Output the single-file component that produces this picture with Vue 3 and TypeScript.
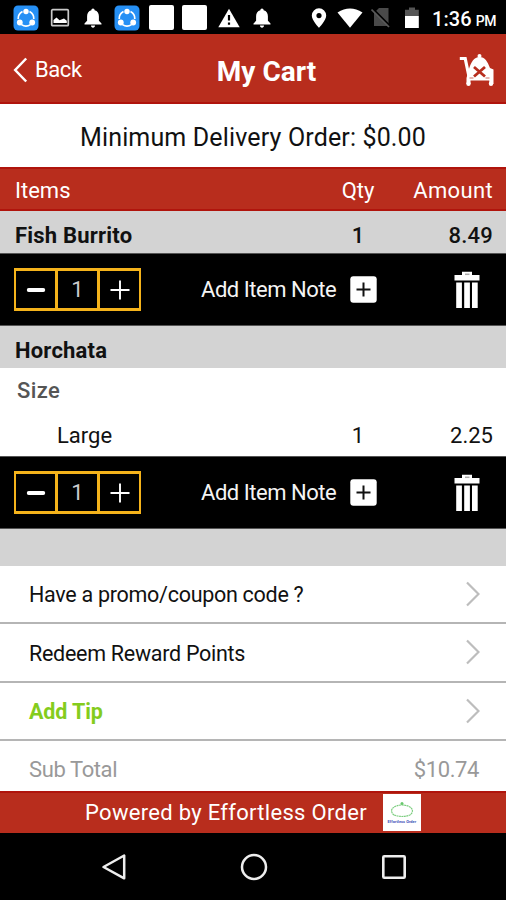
<script setup lang="ts">
import { ref } from 'vue'

interface CartItem {
  name: string
  qty: number
  price: string
  option?: { group: string; value: string }
}

const items = ref<CartItem[]>([
  { name: 'Fish Burrito', qty: 1, price: '8.49' },
  { name: 'Horchata', qty: 1, price: '2.25', option: { group: 'Size', value: 'Large' } },
])

const actions = [
  { label: 'Have a promo/coupon code ?', kind: 'promo' },
  { label: 'Redeem Reward Points', kind: 'redeem' },
  { label: 'Add Tip', kind: 'tip' },
]

const notifications = ['share', 'image', 'bell', 'share', 'square', 'square', 'warning', 'bell']

function remove(index: number) {
  items.value.splice(index, 1)
}
</script>

<template>
  <div class="phone">
    <div class="status">
      <div class="notifications">
        <span v-for="(icon, i) in notifications" :key="i" class="cell">
          <svg v-if="icon === 'share'" width="26" height="26" viewBox="0 0 26 26">
            <rect x="0.5" y="0.5" width="25" height="25" rx="4.5" fill="#2690f5" />
            <path d="M9.5 6.500A8 8 0 0 0 5.200 14M16.500 6.500A8 8 0 0 1 20.800 14M8.500 19.600A8 8 0 0 0 17.500 19.600" fill="none" stroke="#fff" stroke-width="1.700" />
            <g fill="#fff"><circle cx="13" cy="6.500" r="2.700" /><circle cx="6.800" cy="17.500" r="2.900" /><circle cx="19.200" cy="17.500" r="2.900" /></g>
          </svg>
          <svg v-else-if="icon === 'image'" width="20" height="20" viewBox="0 0 20 20">
            <rect x="1.7" y="1.7" width="16.6" height="16" rx="1" fill="none" stroke="#c9c9c9" stroke-width="1.7" />
            <path d="M3.500 15V12l3-2.500 3 2.700 4.500-1.700 2.800 2.300V15z" fill="#fff" />
          </svg>
          <svg v-else-if="icon === 'bell'" width="18" height="20" viewBox="0 0 18 20">
            <path d="M9 .5c1 0 1.600.7 1.600 1.800 3 .8 4.300 3 4.300 6v4.500l2.600 2.700v1H.5v-1l2.600-2.700V8.300c0-3 1.300-5.200 4.300-6C7.400 1.200 8 .5 9 .5zM7 17.500h4c0 1.300-.8 2.200-2 2.200s-2-.9-2-2.200z" fill="#fff" />
          </svg>
          <svg v-else-if="icon === 'warning'" width="22" height="20" viewBox="0 0 22 20">
            <path d="M11 .8 21.700 19.300H.3z" fill="#fff" />
            <path d="M11 7v5.500M11 14.500v2.300" stroke="#000" stroke-width="2.200" />
          </svg>
          <i v-else class="block"></i>
        </span>
      </div>
      <div class="system">
        <span class="sys"><svg width="16" height="20" viewBox="0 0 16 20"><path fill="#fff" fill-rule="evenodd" d="M8 .3a7.200 7.200 0 0 1 7.200 7.200C15.200 12.500 8 19.700 8 19.700S.8 12.500.8 7.500A7.200 7.200 0 0 1 8 .3zm0 4.700a2.600 2.600 0 1 0 0 5.200A2.600 2.600 0 0 0 8 5z" /></svg></span>
        <span class="sys"><svg width="26" height="20" viewBox="0 0 26 20"><path fill="#fff" d="M.5 4.500Q13-3.500 25.500 4.500L13 19.700z" /></svg></span>
        <span class="sys"><svg width="20" height="21" viewBox="0 0 20 21"><path fill="#4a4a4a" d="M8 1h9.500v18H3V6z" /><path d="M1.500 1.500 19 19" stroke="#000" stroke-width="2" /><path d="M.5 2.500 18 20" stroke="#5a5a5a" stroke-width="1.700" /></svg></span>
        <span class="sys"><svg width="16" height="22" viewBox="0 0 16 22"><path fill="#555" d="M5 .5h6v2.300h3.800V9H1V2.800h4z" /><path fill="#fff" d="M1 9h13.800v12H1z" /></svg></span>
        <span class="clock">1:36<small>PM</small></span>
      </div>
    </div>

    <header class="header">
      <button class="back">
        <svg width="15" height="26" viewBox="0 0 15 26"><path d="M13.200 1.500 2.200 13 13.200 24.500" fill="none" stroke="#fff" stroke-width="2.500" /></svg>
        <span>Back</span>
      </button>
      <h1>My Cart</h1>
      <svg class="cart" width="35" height="34" viewBox="0 0 35 34">
        <path d="M.8 5.500h5.400L10.500 26" fill="none" stroke="#fff" stroke-width="3.200" />
        <circle cx="20.500" cy="3" r="2" fill="#fff" />
        <path d="M9.500 17.500C12 9 15 4 20.500 4S28.500 8.500 31 15l3.500 1.500V31h-4.200v-3.500H11.500V31h-4v-6z" fill="#fff" />
        <path d="m15 14 11 9.500M26 14l-11 9.500" stroke="#b82d1d" stroke-width="2.800" />
        <path d="M10.500 25h4M26.500 25h4" stroke="#b82d1d" stroke-width=".7" />
        <circle cx="9.500" cy="30.700" r="2.200" fill="#fff" /><circle cx="32" cy="30.700" r="2.200" fill="#fff" />
      </svg>
    </header>

    <div class="minimum">Minimum Delivery Order: $0.00</div>

    <div class="row heading">
      <span>Items</span><span class="qty">Qty</span><span class="amount wide">Amount</span>
    </div>

    <section v-for="(item, index) in items" :key="item.name">
      <div class="row title">
        <span>{{ item.name }}</span>
        <template v-if="!item.option">
          <span class="qty strong">{{ item.qty }}</span><span class="amount strong">{{ item.price }}</span>
        </template>
      </div>
      <div v-if="item.option" class="options">
        <div class="group">{{ item.option.group }}</div>
        <div class="row option">
          <span class="value">{{ item.option.value }}</span>
          <span class="qty">{{ item.qty }}</span><span class="amount">{{ item.price }}</span>
        </div>
      </div>
      <div class="controls">
        <div class="stepper">
          <button @click="item.qty = Math.max(1, item.qty - 1)"><svg width="20" height="20" viewBox="0 0 20 20"><path d="M2.700 10h14.600" stroke="#fff" stroke-width="3.800" stroke-linecap="round" /></svg></button>
          <span>{{ item.qty }}</span>
          <button @click="item.qty++"><svg width="20" height="20" viewBox="0 0 20 20"><path d="M.5 10h19M10 .5v19" stroke="#fff" stroke-width="1.900" /></svg></button>
        </div>
        <button class="note">
          <span>Add Item Note</span>
          <svg width="27" height="27" viewBox="0 0 27 27"><rect x=".3" y=".3" width="26.400" height="26.400" rx="3" fill="#fff" /><path d="M6.500 13.500h14M13.500 6.500v14" stroke="#111" stroke-width="2" /></svg>
        </button>
        <button class="trash" @click="remove(index)">
          <svg width="26" height="38" viewBox="0 0 26 38"><path fill="#fff" d="M.5 4H8V.8h10V4h7.500v5.500h-25zM2.200 11.500h5.700V37H2.200zM10.200 11.500h5.700V37h-5.700zM18 11.500h5.700V37H18z" /><path d="M11 3.300h4.500" stroke="#aaa" stroke-width="1.500" /></svg>
        </button>
      </div>
    </section>

    <div class="spacer"></div>

    <div v-for="action in actions" :key="action.kind" class="action">
      <span :class="action.kind">{{ action.label }}</span>
      <svg width="14" height="26" viewBox="0 0 14 26"><path d="M1 1.500 12.500 13 1 24.500" fill="none" stroke="#bdbdbd" stroke-width="2.200" /></svg>
    </div>
    <div class="subtotal"><span>Sub Total</span><span>$10.74</span></div>

    <footer class="powered">
      <span>Powered by Effortless Order</span>
      <div class="logo">
        <svg width="34" height="20" viewBox="0 0 34 20"><path d="M9 15C3 10 9 5 17 5s14 5 8 10M9 15q8 3 16 0" fill="none" stroke="#7ccd7f" stroke-width="1.200" stroke-dasharray="2 .5" /><circle cx="17" cy="3.500" r="1.500" fill="#67c76b" /></svg>
        <b>Effortless Order</b>
      </div>
    </footer>

    <nav class="nav">
      <svg width="26" height="28" viewBox="0 0 26 28"><path d="M23.200 2.500v22.800L2.500 14z" fill="none" stroke="#eee" stroke-width="2.500" stroke-linejoin="round" /></svg>
      <svg width="28" height="28" viewBox="0 0 28 28"><circle cx="14" cy="14" r="12" fill="none" stroke="#eee" stroke-width="2.500" /></svg>
      <svg width="26" height="26" viewBox="0 0 26 26"><rect x="2.300" y="2.300" width="21.400" height="21.400" rx="1" fill="none" stroke="#eee" stroke-width="2.600" /></svg>
    </nav>
  </div>
</template>

<style>
body { margin: 0; background: #000; }
</style>

<style scoped>
* { box-sizing: border-box; }
.phone { width: 506px; height: 900px; overflow: hidden; display: flex; flex-direction: column; background: #fff; color: #111; font: 22px/1 Roboto, "Liberation Sans", sans-serif; white-space: nowrap; }
.phone > * { flex-shrink: 0; }
button { appearance: none; border: 0; padding: 0; background: none; color: inherit; font: inherit; letter-spacing: inherit; }
svg { display: block; flex: none; }

.status { height: 34px; background: #000; color: #fff; display: flex; justify-content: space-between; padding: 1px 10px 0 9px; }
.notifications, .system { display: flex; align-items: center; }
.cell { width: 33.800px; display: flex; justify-content: center; }
.block { width: 25px; height: 25px; border-radius: 2px; background: #fff; }
.sys { width: 31px; display: flex; justify-content: center; }
.clock { margin-left: 5px; width: 64px; padding-top: 2px; font-size: 20px; font-weight: 500; letter-spacing: .1px; }
.clock small { font-size: 14px; margin-left: 4px; letter-spacing: -.4px; }

.header { height: 70px; background: #b82d1d; border-bottom: 2px solid #b0140c; color: #fff; display: grid; grid-template-columns: 146px 1fr 120px; align-items: center; padding: 4px 12px 0 13px; }
.back { display: flex; align-items: center; gap: 7px; letter-spacing: -.4px; }
h1 { margin: 0; padding-top: 3px; font-size: 28px; line-height: 1; font-weight: 700; text-align: center; }
.cart { justify-self: end; }

.minimum { height: 63px; display: flex; align-items: center; justify-content: center; padding-top: 3px; font-size: 25px; letter-spacing: .15px; }
.row { display: grid; grid-template-columns: 1fr 60px 105px; align-items: center; padding: 0 13px 0 15px; }
.qty { text-align: center; }
.amount { text-align: right; }
.wide { letter-spacing: .35px; }
.heading { height: 44px; background: #b82d1d; border-top: 2px solid #b0140c; border-bottom: 2px solid #b0140c; color: #fff; padding-top: 4px; }
.title { height: 42px; background: #d3d3d3; font-weight: 700; letter-spacing: .2px; padding-top: 8px; }
.strong { font-weight: 500; }
.controls { height: 73px; background: #000; color: #f4f4f4; border-top: 1px solid #555; border-bottom: 1px solid #555; display: flex; align-items: center; padding: 0 26px 0 14px; }
.stepper { display: flex; width: 127px; height: 43px; border: 2px solid #f5b31b; border-top-width: 3px; border-bottom-width: 3px; }
.stepper > * { flex: 1; display: flex; align-items: center; justify-content: center; }
.stepper > span { border: solid #f5b31b; border-width: 0 3px; color: #ccc; }
.note { display: flex; align-items: center; gap: 14px; margin-left: 60px; letter-spacing: -.47px; }
.note span { padding-top: 1px; }
.trash { margin-left: auto; }
.options { height: 88px; }
.group { padding: 12px 17px 0; font-weight: 500; color: #555; letter-spacing: .4px; }
.option { padding-top: 23px; }
.value { padding-left: 42px; }
.spacer { height: 37px; background: #d3d3d3; }
.action { height: 58.300px; border-bottom: 2px solid #b5b5b5; display: flex; align-items: center; justify-content: space-between; padding: 0 26px 0 29px; font-size: 21.500px; letter-spacing: -.28px; }
.action span { padding-top: 2px; }
.action .tip { color: #84cc1d; font-weight: 700; letter-spacing: -.1px; }
.subtotal { flex: 1 1 0; min-height: 0; display: flex; justify-content: space-between; align-items: center; padding: 9px 27px 0 29px; color: #999; letter-spacing: -.4px; }
.powered { height: 42px; background: #b82d1d; border-top: 2px solid #b0140c; color: #fff; display: flex; align-items: center; gap: 16px; padding-left: 85px; letter-spacing: .3px; }
.logo { width: 38px; height: 37px; margin-top: -1px; background: #fff; display: flex; flex-direction: column; align-items: center; padding-top: 6px; letter-spacing: 0; }
.logo b { font-size: 4px; color: #4554b8; line-height: 4px; }
.nav { height: 67px; background: #000; display: flex; align-items: center; justify-content: space-between; padding: 0 99px 0 101px; }
</style>
